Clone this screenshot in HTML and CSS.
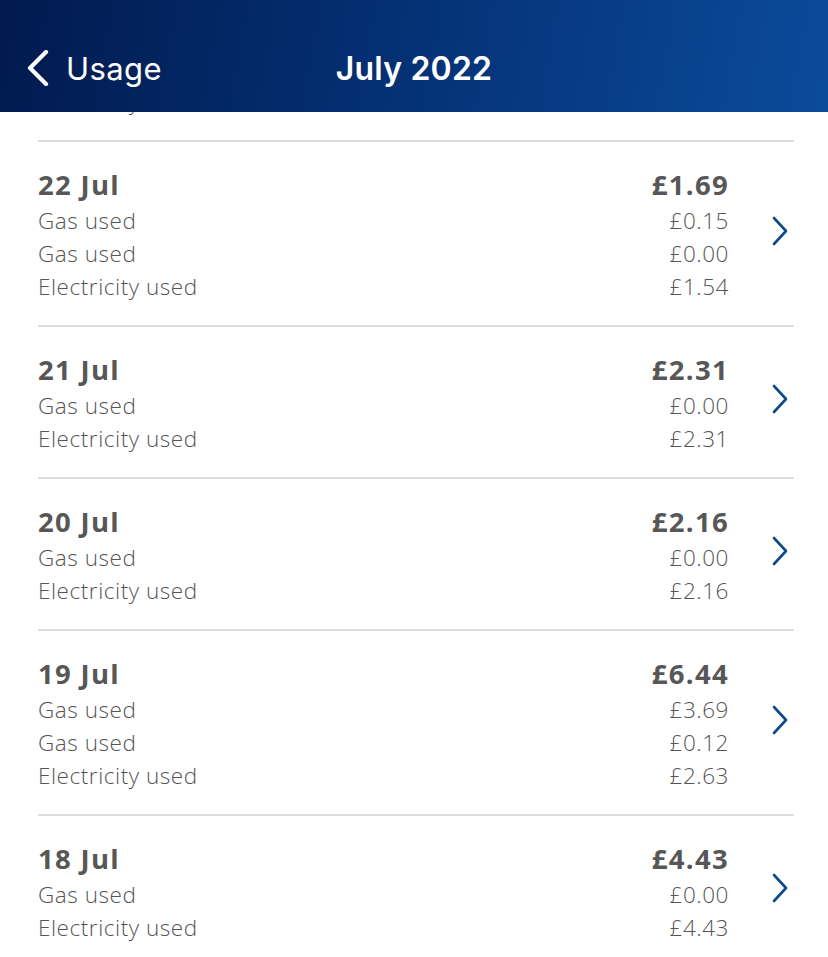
FILE: index.html
```html
<!DOCTYPE html>
<html lang="en">
<head>
<meta charset="utf-8">
<title>July 2022</title>
<link rel="stylesheet" href="styles.css">
</head>
<body>
<header class="topbar">
  <div class="back">
    <svg class="back-icon" width="26" height="36" viewBox="0 0 26 36"><path d="M21 2 L5 18 L21 34" fill="none" stroke="#fff" stroke-width="4.2" stroke-linecap="round" stroke-linejoin="round"/></svg>
    <span class="back-label">Usage</span>
  </div>
  <h1 class="title">July 2022</h1>
  <div class="spacer"></div>
</header>
<main class="list">
  <div class="row partial">
    <div class="info">
      <div class="line"><span>Electricity used</span><span>£2.05</span></div>
    </div>
  </div>
  <div class="row">
    <div class="info">
      <div class="head"><span>22 Jul</span><span>£1.69</span></div>
      <div class="line"><span>Gas used</span><span>£0.15</span></div>
      <div class="line"><span>Gas used</span><span>£0.00</span></div>
      <div class="line"><span>Electricity used</span><span>£1.54</span></div>
    </div>
    <svg class="chev" width="18" height="30" viewBox="0 0 18 30"><path d="M3 2 L15 15 L3 28" fill="none" stroke="#0c4a8e" stroke-width="2.6" stroke-linecap="round" stroke-linejoin="round"/></svg>
  </div>
  <div class="row">
    <div class="info">
      <div class="head"><span>21 Jul</span><span>£2.31</span></div>
      <div class="line"><span>Gas used</span><span>£0.00</span></div>
      <div class="line"><span>Electricity used</span><span>£2.31</span></div>
    </div>
    <svg class="chev" width="18" height="30" viewBox="0 0 18 30"><path d="M3 2 L15 15 L3 28" fill="none" stroke="#0c4a8e" stroke-width="2.6" stroke-linecap="round" stroke-linejoin="round"/></svg>
  </div>
  <div class="row">
    <div class="info">
      <div class="head"><span>20 Jul</span><span>£2.16</span></div>
      <div class="line"><span>Gas used</span><span>£0.00</span></div>
      <div class="line"><span>Electricity used</span><span>£2.16</span></div>
    </div>
    <svg class="chev" width="18" height="30" viewBox="0 0 18 30"><path d="M3 2 L15 15 L3 28" fill="none" stroke="#0c4a8e" stroke-width="2.6" stroke-linecap="round" stroke-linejoin="round"/></svg>
  </div>
  <div class="row">
    <div class="info">
      <div class="head"><span>19 Jul</span><span>£6.44</span></div>
      <div class="line"><span>Gas used</span><span>£3.69</span></div>
      <div class="line"><span>Gas used</span><span>£0.12</span></div>
      <div class="line"><span>Electricity used</span><span>£2.63</span></div>
    </div>
    <svg class="chev" width="18" height="30" viewBox="0 0 18 30"><path d="M3 2 L15 15 L3 28" fill="none" stroke="#0c4a8e" stroke-width="2.6" stroke-linecap="round" stroke-linejoin="round"/></svg>
  </div>
  <div class="row">
    <div class="info">
      <div class="head"><span>18 Jul</span><span>£4.43</span></div>
      <div class="line"><span>Gas used</span><span>£0.00</span></div>
      <div class="line"><span>Electricity used</span><span>£4.43</span></div>
    </div>
    <svg class="chev" width="18" height="30" viewBox="0 0 18 30"><path d="M3 2 L15 15 L3 28" fill="none" stroke="#0c4a8e" stroke-width="2.6" stroke-linecap="round" stroke-linejoin="round"/></svg>
  </div>
</main>
</body>
</html>
```
FILE: styles.css
```css
html, body {
  margin: 0;
  padding: 0;
  background: #fff;
  overflow: hidden;
  height: 957px;
}
body {
  font-family: "Open Sans", "Liberation Sans", sans-serif;
  color: #5b5b5b;
}
.topbar {
  height: 112px;
  background: linear-gradient(100deg, #011a4e 0%, #042f72 45%, #0b4b9b 100%);
  display: grid;
  grid-template-columns: 1fr auto 1fr;
  align-items: center;
  padding-top: 25px;
  box-sizing: border-box;
}
.back {
  display: flex;
  align-items: center;
  gap: 15px;
  padding-left: 25px;
}
.back-icon { display: block; margin-top: -2px; }
.back-label {
  font-family: Inter, "Open Sans", sans-serif;
  color: #fff;
  font-size: 31px;
  font-weight: 400;
  letter-spacing: 0.4px;
}
.title {
  margin: 0;
  font-family: Inter, "Open Sans", sans-serif;
  color: #fff;
  font-size: 32px;
  font-weight: 600;
  letter-spacing: 0.2px;
}
.list {
  height: 845px;
  overflow: hidden;
  display: flex;
  flex-direction: column;
}
.row {
  flex: none;
  margin: 0 34px 0 38px;
  padding: 22px 0;
  border-bottom: 2px solid #dcdcdc;
  display: flex;
  align-items: center;
}
.row.partial {
  margin-top: -27px;
  padding-top: 0;
}
.info {
  width: 691px;
  display: flex;
  flex-direction: column;
}
.head, .line {
  display: flex;
  justify-content: space-between;
}
.head {
  height: 40px;
  align-items: center;
  font-size: 27.5px;
  font-weight: 700;
  letter-spacing: 1.3px;
  color: #575757;
}
.line {
  height: 33px;
  align-items: center;
  font-size: 22.5px;
  font-weight: 300;
  letter-spacing: 0.55px;
  color: #555;
}
.chev {
  display: block;
  margin-left: 42px;
  margin-top: -6px;
}
```
